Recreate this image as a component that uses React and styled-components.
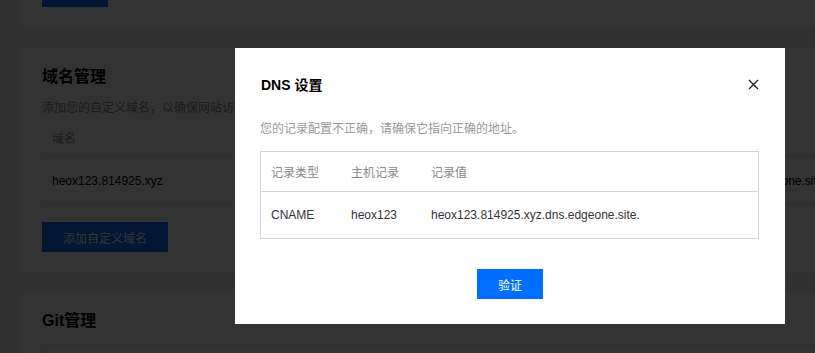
import React from 'react'
import styled, { createGlobalStyle } from 'styled-components'

const GlobalStyle = createGlobalStyle`
  html, body {
    margin: 0;
    padding: 0;
    background: #f3f4f7;
    font-family: "Liberation Sans", Arial, "Noto Sans CJK SC", sans-serif;
    font-size: 12px;
    color: #000;
    overflow: hidden;
  }
  * {
    box-sizing: border-box;
  }
`

const Page = styled.div`
  width: 1100px;
  padding: 0 0 0 22px;
  margin-top: -23px;
`

const Card = styled.section`
  background: #fff;
  padding: ${({ $top }) => ($top ? '0' : '17px')} 20px ${({ $top }) => ($top ? '20px' : '19px')};
  margin-bottom: 21px;
`

const CardTitle = styled.h3`
  margin: 0;
  font-size: 16px;
  line-height: 24px;
  font-weight: bold;
  color: #000;
`

const CardDesc = styled.p`
  margin: 8px 0 0;
  line-height: 22px;
  color: #888;
`

const DomainRow = styled.div`
  display: grid;
  grid-template-columns: 566px 1fr;
  height: ${({ $head }) => ($head ? '38px' : '48px')};
  align-items: center;
  border-bottom: 1px solid #e5e5e5;
  padding-left: 10px;
  color: ${({ $head }) => ($head ? '#888' : '#000')};
  white-space: nowrap;
`

const PrimaryButton = styled.button`
  display: block;
  border: none;
  background: #006eff;
  color: #fff;
  font-family: inherit;
  font-size: 12px;
  height: 30px;
  padding: 0;
  width: ${({ $w }) => $w}px;
  white-space: nowrap;
  cursor: pointer;
`

const ButtonRow = styled.div`
  margin-top: 17px;
`

const GitBox = styled.div`
  margin-top: 12px;
  height: 60px;
  border: 1px solid #e5e5e5;
`

const Mask = styled.div`
  position: fixed;
  inset: 0;
  background: rgba(0, 0, 0, 0.8);
  display: flex;
  align-items: flex-start;
  padding: 48px 0 0 235px;
`

const Dialog = styled.div`
  width: 550px;
  background: #fff;
  padding: 26px 26px 25px 26px;
`

const DialogHeader = styled.div`
  display: flex;
  justify-content: space-between;
  align-items: center;
  height: 20px;
`

const DialogTitle = styled.h2`
  margin: 0;
  font-size: 14px;
  font-weight: bold;
  color: #000;
`

const CloseButton = styled.button`
  border: none;
  background: none;
  padding: 0;
  margin-right: -1px;
  width: 14px;
  height: 14px;
  display: flex;
  align-items: center;
  justify-content: center;
  cursor: pointer;
`

const DialogDesc = styled.p`
  margin: 26px 0 0 -1px;
  line-height: 18px;
  color: #999;
`

const RecordTable = styled.div`
  margin: 13px 0 0 -1px;
  border: 1px solid #cfd5de;
`

const RecordRow = styled.div`
  display: grid;
  grid-template-columns: 80px 80px 1fr;
  align-items: center;
  padding-left: 10px;
  height: ${({ $head }) => ($head ? '39px' : '47px')};
  color: ${({ $head }) => ($head ? '#888' : '#333')};
  & + & {
    border-top: 1px solid #cfd5de;
  }
`

const DialogFooter = styled.div`
  display: flex;
  justify-content: center;
  margin-top: 30px;
`

const CloseIcon = () => (
  <svg width="11" height="11" viewBox="0 0 11 11">
    <path d="M1 1 L10 10 M10 1 L1 10" stroke="#222" strokeWidth="1.4" />
  </svg>
)

const App = () => (
  <>
    <GlobalStyle />
    <Page>
      <Card $top>
        <PrimaryButton $w={66}>保存</PrimaryButton>
      </Card>
      <Card>
        <CardTitle>域名管理</CardTitle>
        <CardDesc>添加您的自定义域名，以确保网站访问的稳定性与安全性。</CardDesc>
        <div>
          <DomainRow $head>
            <span>域名</span>
            <span>CNAME</span>
          </DomainRow>
          <DomainRow>
            <span>heox123.814925.xyz</span>
            <span>heox123.814925.xyz.dns.edgeone.site</span>
          </DomainRow>
        </div>
        <ButtonRow>
          <PrimaryButton $w={126}>添加自定义域名</PrimaryButton>
        </ButtonRow>
      </Card>
      <Card>
        <CardTitle>Git管理</CardTitle>
        <GitBox />
      </Card>
    </Page>
    <Mask>
      <Dialog>
        <DialogHeader>
          <DialogTitle>DNS 设置</DialogTitle>
          <CloseButton aria-label="关闭">
            <CloseIcon />
          </CloseButton>
        </DialogHeader>
        <DialogDesc>您的记录配置不正确，请确保它指向正确的地址。</DialogDesc>
        <RecordTable>
          <RecordRow $head>
            <span>记录类型</span>
            <span>主机记录</span>
            <span>记录值</span>
          </RecordRow>
          <RecordRow>
            <span>CNAME</span>
            <span>heox123</span>
            <span>heox123.814925.xyz.dns.edgeone.site.</span>
          </RecordRow>
        </RecordTable>
        <DialogFooter>
          <PrimaryButton $w={66}>验证</PrimaryButton>
        </DialogFooter>
      </Dialog>
    </Mask>
  </>
)

export default App
